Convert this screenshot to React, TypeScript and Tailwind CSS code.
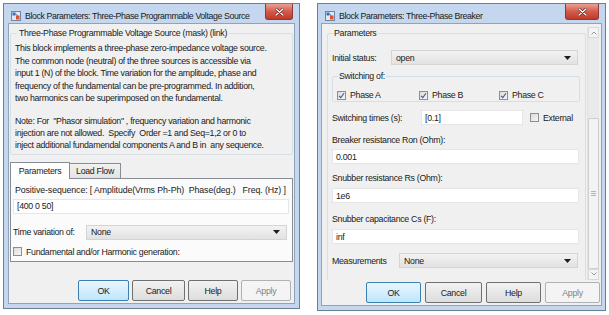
import React from 'react';

/**
 * Two Simulink "Block Parameters" dialogs side by side
 */

const DESCRIPTION = [
  'This block implements a three-phase zero-impedance voltage source.',
  'The common node (neutral) of the three sources is accessible via',
  'input 1 (N) of the block. Time variation for the amplitude, phase and',
  'frequency of the fundamental can be pre-programmed. In addition,',
  'two harmonics can be superimposed on the fundamental.',
];

const NOTE = [
  'Note: For \u00a0"Phasor simulation" , frequency variation and harmonic',
  'injection are not allowed. \u00a0Specify \u00a0Order =1 and Seq=1,2 or 0 to',
  'inject additional fundamendal components A and B in \u00a0any sequence.',
];

function TitleIcon() {
  return (
    <svg width="10" height="10" viewBox="0 0 10 10" className="shrink-0">
      <rect x="0.5" y="0.5" width="9" height="9" fill="#dfe9f5" stroke="#6c86a8" />
      <rect x="1.5" y="1.5" width="3" height="3" fill="#3b6fb6" />
      <rect x="5" y="4.5" width="3.5" height="4" fill="#e0522a" />
      <path d="M4.5 3 L6.5 4.5" stroke="#555" strokeWidth="0.8" />
    </svg>
  );
}

function CloseButton({ className }: { className: string }) {
  return (
    <div
      className={`h-[16px] rounded-b-[3px] border border-t-0 border-[#8a3a3a] bg-linear-to-b from-[#e8a093] via-[#d45a4a] to-[#c0392b] flex items-center justify-center ${className}`}
    >
      <svg width="9" height="8" viewBox="0 0 9 8">
        <path d="M1 1 L8 7 M8 1 L1 7" stroke="#5a1f1f" strokeWidth="2.6" strokeLinecap="round" />
        <path d="M1 1 L8 7 M8 1 L1 7" stroke="#ffffff" strokeWidth="1.4" strokeLinecap="round" />
      </svg>
    </div>
  );
}

function Btn({ label, className, primary, disabled }: { label: string; className: string; primary?: boolean; disabled?: boolean }) {
  return (
    <div
      className={`h-[21px] flex items-center justify-center rounded-[2px] border ${
        primary
          ? 'border-[#3c7fb1] bg-linear-to-b from-[#eaf6fd] to-[#bee6fd]'
          : disabled
            ? 'border-[#adb2b5] bg-[#f4f4f4] text-[#838383]'
            : 'border-[#707070] bg-linear-to-b from-[#f2f2f2] to-[#dddddd]'
      } ${className}`}
    >
      {label}
    </div>
  );
}

function Select({ value, className }: { value: string; className: string }) {
  return (
    <div
      className={`h-[15px] flex items-center justify-between pl-[4px] pr-[6px] border border-[#d4d4d4] bg-linear-to-b from-[#f2f2f2] to-[#e2e2e2] ${className}`}
    >
      <span>{value}</span>
      <svg width="7" height="4" viewBox="0 0 7 4">
        <path d="M0 0 H7 L3.5 4 Z" fill="#1e1e1e" />
      </svg>
    </div>
  );
}

function Check({ checked }: { checked?: boolean }) {
  return (
    <div className="w-[9px] h-[9px] border border-[#8f8f8f] bg-linear-to-br from-[#dcdcdc] to-[#f6f6f6] flex items-center justify-center shrink-0">
      {checked && (
        <svg width="7" height="7" viewBox="0 0 7 7">
          <path d="M1 3.8 L2.8 5.6 L6 1.2" fill="none" stroke="#3a5f9a" strokeWidth="1.1" />
        </svg>
      )}
    </div>
  );
}

function Field({ value, className }: { value: string; className: string }) {
  return (
    <div className={`h-[15px] flex items-center pl-[3px] bg-white border border-[#e6e6e6] ${className}`}>{value}</div>
  );
}

function VoltageSourceDialog() {
  return (
    <div className="mt-[3px] ml-[3px] w-[297px] h-[306px] border border-[#6d7f96] bg-[#c4d7ee] flex flex-col px-[4px] pb-[4px]">
      <div className="h-[19px] flex items-start justify-between shrink-0">
        <div className="flex items-center gap-[4px] mt-[6px] ml-[3px] whitespace-nowrap tracking-[-0.4px]">
          <TitleIcon />
          <span>Block Parameters: Three-Phase Programmable Voltage Source</span>
        </div>
        <CloseButton className="w-[28px] mr-[2px]" />
      </div>
      <div className="flex-1 border border-[#8fa3bd] bg-[#f0f0f0] flex flex-col px-[1px]">
        <fieldset className="mt-[3px] w-[283px] border border-[#d5dfe5] rounded-[2px] px-[4px] pb-[3px]">
          <legend className="ml-[2px] px-[2px] leading-[12px] whitespace-nowrap">Three-Phase Programmable Voltage Source (mask) (link)</legend>
          <div className="mt-[3px] leading-[12.5px] whitespace-nowrap">
            {DESCRIPTION.map((line) => (
              <div key={line}>{line}</div>
            ))}
          </div>
          <div className="mt-[10px] leading-[12px] whitespace-nowrap">
            {NOTE.map((line) => (
              <div key={line}>{line}</div>
            ))}
          </div>
        </fieldset>
        <div className="mt-[7px] flex items-end h-[16px]">
          <div className="w-[60px] h-[17px] -mb-[1px] border border-[#898c95] border-b-0 bg-white flex items-center justify-center relative z-10">Parameters</div>
          <div className="w-[51px] h-[15px] border border-l-0 border-[#898c95] border-b-0 bg-linear-to-b from-[#f2f2f2] to-[#e3e3e3] flex items-center justify-center">Load Flow</div>
        </div>
        <div className="w-[283px] h-[84px] border border-[#898c95] bg-[#fbfbfb] flex flex-col px-[2px]">
          <div className="mt-[5px] ml-[2px] leading-[12px] whitespace-nowrap tracking-[-0.1px]">Positive-sequence: [ Amplitude(Vrms Ph-Ph) &nbsp;Phase(deg.) &nbsp; Freq. (Hz) ]</div>
          <Field value="[400 0 50]" className="mt-[3px] w-[276px]" />
          <div className="mt-[11px] flex items-center">
            <span className="w-[73px] whitespace-nowrap">Time variation of:</span>
            <Select value="None" className="w-[201px]" />
          </div>
          <div className="mt-[6px] flex items-center gap-[4px]">
            <Check />
            <span>Fundamental and/or Harmonic generation:</span>
          </div>
        </div>
        <div className="mt-auto mb-[2px] flex justify-end gap-[3px] pr-[2px]">
          <Btn label="OK" primary className="w-[51px]" />
          <Btn label="Cancel" className="w-[53px]" />
          <Btn label="Help" className="w-[50px]" />
          <Btn label="Apply" disabled className="w-[50px]" />
        </div>
      </div>
    </div>
  );
}

function BreakerDialog() {
  return (
    <div className="mt-[3px] ml-[17px] w-[289px] h-[308px] border border-[#6d7f96] bg-[#c4d7ee] flex flex-col px-[3px] pb-[4px]">
      <div className="h-[19px] flex items-start justify-between shrink-0">
        <div className="flex items-center gap-[4px] mt-[6px] ml-[4px] tracking-[-0.4px]">
          <TitleIcon />
          <span>Block Parameters: Three-Phase Breaker</span>
        </div>
        <CloseButton className="w-[34px] mr-[3px]" />
      </div>
      <div className="flex-1 border border-[#8fa3bd] bg-[#f0f0f0] flex flex-col">
        <div className="flex h-[256px]">
          <div className="flex-1 overflow-hidden pl-[5px] pr-[1px]">
            <fieldset className="mt-[3px] h-[300px] border border-[#d5dfe5] rounded-[2px] px-[4px]">
              <legend className="ml-[1px] px-[1px] leading-[12px]">Parameters</legend>
              <div className="mt-[11px] flex items-center">
                <span className="w-[59px]">Initial status:</span>
                <Select value="open" className="w-[187px]" />
              </div>
              <fieldset className="mt-[5px] w-[248px] h-[32px] border border-[#d5dfe5] rounded-[2px] pl-[4px]">
                <legend className="ml-[1px] px-[1px] leading-[12px]">Switching of:</legend>
                <div className="mt-[7px] flex items-center">
                  <div className="w-[82px] flex items-center gap-[4px]"><Check checked /><span>Phase A</span></div>
                  <div className="w-[80px] flex items-center gap-[4px]"><Check checked /><span>Phase B</span></div>
                  <div className="flex items-center gap-[4px]"><Check checked /><span>Phase C</span></div>
                </div>
              </fieldset>
              <div className="mt-[8px] flex items-center">
                <span className="w-[89px]">Switching times (s):</span>
                <Field value="[0.1]" className="w-[102px]" />
                <div className="ml-[7px] flex items-center gap-[4px]"><Check /><span>External</span></div>
              </div>
              <div className="mt-[9px] leading-[12px]">Breaker resistance Ron (Ohm):</div>
              <Field value="0.001" className="mt-[3px] w-[247px]" />
              <div className="mt-[8px] leading-[12px]">Snubber resistance Rs (Ohm):</div>
              <Field value="1e6" className="mt-[4px] w-[247px]" />
              <div className="mt-[10px] leading-[12px]">Snubber capacitance Cs (F):</div>
              <Field value="inf" className="mt-[4px] w-[247px]" />
              <div className="mt-[9px] flex items-center">
                <span className="w-[67px]">Measurements</span>
                <Select value="None" className="w-[179px]" />
              </div>
            </fieldset>
          </div>
          <div className="w-[12px] mt-[3px] mr-[2px] flex flex-col bg-[#eaeaea] border-l border-[#e2e2e2]">
            <div className="h-[12px] flex items-center justify-center border border-[#dadada] bg-[#f4f4f4]">
              <svg width="6" height="4" viewBox="0 0 6 4"><path d="M0.5 3.5 L3 1 L5.5 3.5" fill="none" stroke="#9a9a9a" /></svg>
            </div>
            <div className="mt-[80px] h-[160px] border border-[#cfcfcf] bg-[#f3f3f3] rounded-[1px] flex items-center justify-center">
              <svg width="5" height="5" viewBox="0 0 5 5"><path d="M0 0.5 H5 M0 2.5 H5 M0 4.5 H5" stroke="#b5b5b5" /></svg>
            </div>
            <div className="mt-auto h-[12px] flex items-center justify-center border border-[#dadada] bg-[#f4f4f4]">
              <svg width="6" height="4" viewBox="0 0 6 4"><path d="M0.5 0.5 L3 3 L5.5 0.5" fill="none" stroke="#9a9a9a" /></svg>
            </div>
          </div>
        </div>
        <div className="mt-auto mb-[2px] flex justify-end gap-[4px] pr-[1px]">
          <Btn label="OK" primary className="w-[55px]" />
          <Btn label="Cancel" className="w-[57px]" />
          <Btn label="Help" className="w-[55px]" />
          <Btn label="Apply" disabled className="w-[55px]" />
        </div>
      </div>
    </div>
  );
}

export default function App() {
  return (
    <div className="w-[609px] h-[315px] bg-white flex items-start overflow-hidden font-['Liberation_Sans',Arial,sans-serif] text-[8.8px] tracking-[-0.3px] text-[#1a1a1a] leading-[12px]">
      <VoltageSourceDialog />
      <BreakerDialog />
    </div>
  );
}
